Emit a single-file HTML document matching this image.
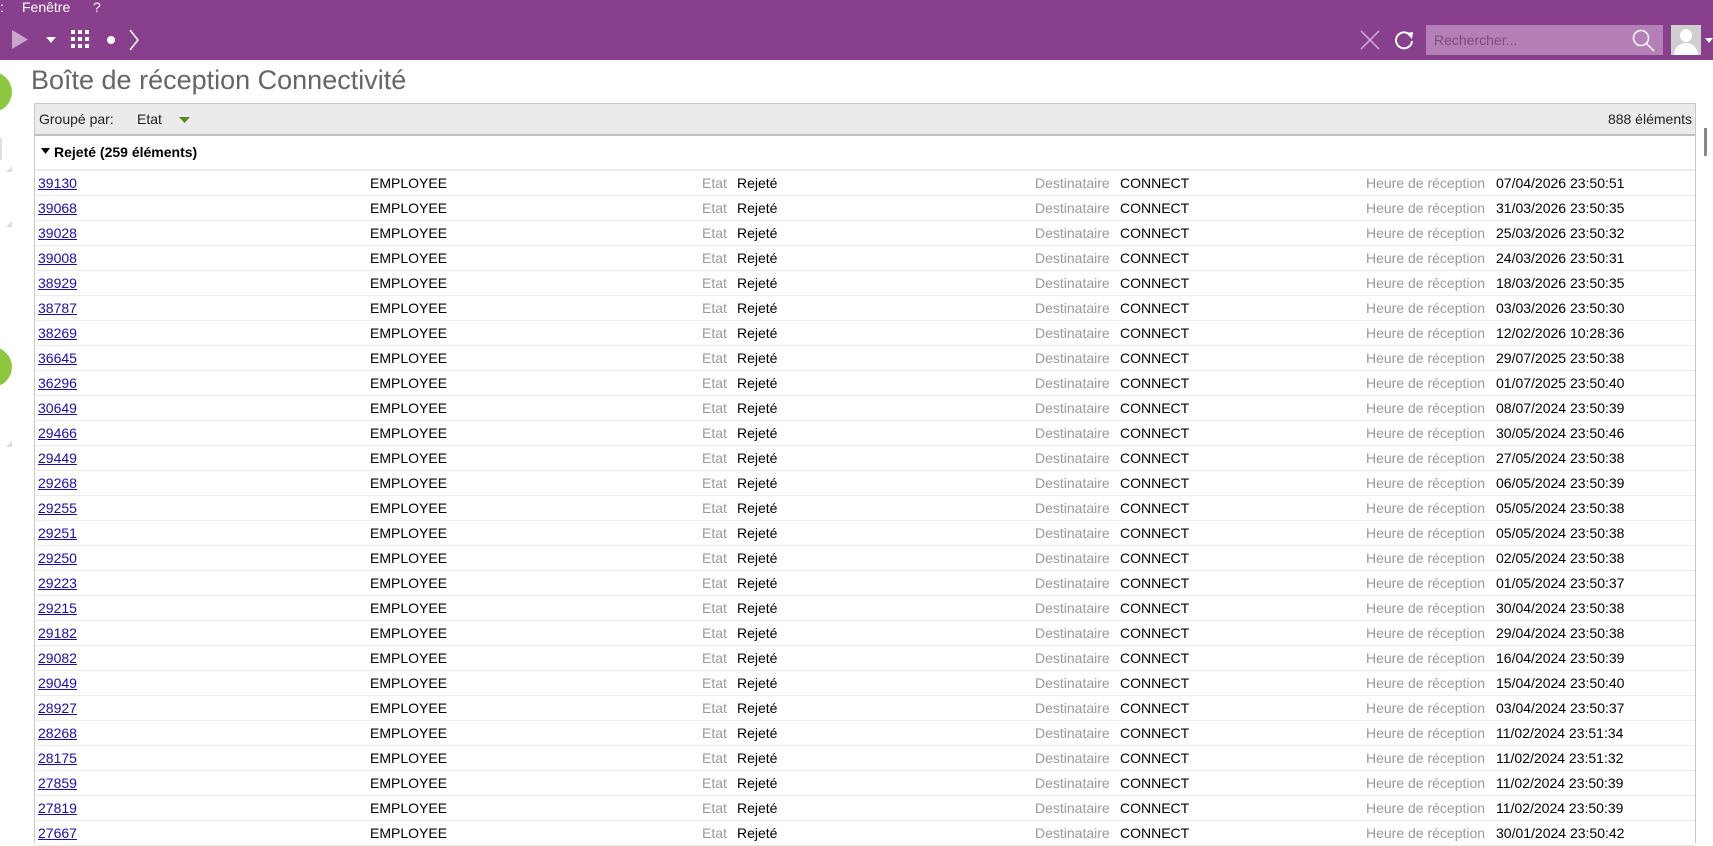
<!DOCTYPE html>
<html><head><meta charset="utf-8"><style>
*{margin:0;padding:0;box-sizing:border-box}
body{width:1713px;height:832px;overflow:hidden;background:#fff;font-family:"Liberation Sans",Arial,sans-serif;position:relative}
.top{position:absolute;left:0;top:0;width:1713px;height:60px;background:#883f8c}
.menu{position:absolute;top:-1px;color:#fff;font-size:14px}
.title{position:absolute;left:31px;top:65px;font-size:27px;color:#666}
.grid{position:absolute;left:34px;top:103px;width:1662px;height:740px;border:1px solid #c8c8c8;border-bottom:none}
.hdr{height:32px;background:#ebebeb;border-bottom:2px solid #c0c0c0;position:relative;font-size:14px;color:#222}
.grp{height:35px;position:relative;font-size:14px;font-weight:bold;border-bottom:2px solid #ececec}
.row{height:25px;border-bottom:1px solid #ececec;position:relative;font-size:14px;color:#000}
.row span{position:absolute;top:4px;white-space:nowrap}
.l{color:#999}
a{color:#1a0dab;text-decoration:underline}
.sb{position:absolute;left:1696px;top:103px;width:17px;height:740px;background:#fff}
.circ{position:absolute;background:#8dc63f;border-radius:50%}
.tri{position:absolute;width:0;height:0;border-left:6px solid transparent;border-bottom:6px solid #ddd}
</style></head><body>
<div class="top">
<span class="menu" style="left:0">:</span>
<span class="menu" style="left:22px">Fenêtre</span>
<span class="menu" style="left:93px">?</span>
<svg style="position:absolute;left:12px;top:30px" width="18" height="19"><path d="M0 0 L16 9.5 L0 19Z" fill="#c9a6cc"/></svg>
<svg style="position:absolute;left:46px;top:37px" width="10" height="6"><path d="M0 0H10L5 6Z" fill="#fff"/></svg>
<svg style="position:absolute;left:71px;top:30px" width="19" height="19" fill="#fff"><rect x="0" y="0" width="4" height="4"/><rect x="7" y="0" width="4" height="4"/><rect x="14" y="0" width="4" height="4"/><rect x="0" y="7" width="4" height="4"/><rect x="7" y="7" width="4" height="4"/><rect x="14" y="7" width="4" height="4"/><rect x="0" y="14" width="4" height="4"/><rect x="7" y="14" width="4" height="4"/><rect x="14" y="14" width="4" height="4"/></svg>
<div style="position:absolute;left:107px;top:36px;width:8px;height:8px;border-radius:50%;background:#fff"></div>
<svg style="position:absolute;left:128px;top:29px" width="12" height="22"><path d="M2 1L10 11L2 21" stroke="#fff" stroke-width="1.5" fill="none"/></svg>
<svg style="position:absolute;left:1360px;top:30px" width="20" height="20"><path d="M1 1L19 19M19 1L1 19" stroke="#c9a6cc" stroke-width="1.6"/></svg>
<svg style="position:absolute;left:1393px;top:29px" width="22" height="22"><path d="M17 6A8 8 0 1 0 19 12" stroke="#fff" stroke-width="2" fill="none"/><path d="M13 4L20 3L19 10Z" fill="#fff"/></svg>
<div style="position:absolute;left:1426px;top:25px;width:237px;height:30px;background:#b57fb8"></div>
<span style="position:absolute;left:1434px;top:32px;font-size:14px;color:#7e4a82">Rechercher...</span>
<svg style="position:absolute;left:1632px;top:29px" width="24" height="24"><circle cx="9" cy="9" r="7.5" stroke="#fff" stroke-width="1.5" fill="none"/><path d="M14.5 14.5L22 22" stroke="#fff" stroke-width="1.5"/></svg>
<div style="position:absolute;left:1671px;top:25px;width:30px;height:30px;background:#cfcfcf;overflow:hidden"><div style="position:absolute;left:9px;top:4px;width:12px;height:13px;border-radius:50%;background:#fff"></div><div style="position:absolute;left:3px;top:18px;width:24px;height:16px;border-radius:12px 12px 0 0;background:#fff"></div></div>
<svg style="position:absolute;left:1705px;top:38px" width="8" height="6"><path d="M0 0H8L4 5Z" fill="#fff"/></svg>
</div>
<div class="circ" style="left:-28px;top:72px;width:40px;height:40px"></div>
<div class="circ" style="left:-28px;top:347px;width:40px;height:40px"></div>
<div class="tri" style="left:6px;top:166px"></div>
<div class="tri" style="left:6px;top:221px"></div>
<div class="tri" style="left:6px;top:441px"></div>
<div style="position:absolute;left:0;top:138px;width:2px;height:22px;background:#e0e0e0"></div>
<div class="title">Boîte de réception Connectivité</div>
<div class="grid">
<div class="hdr"><span style="position:absolute;left:4px;top:7px">Groupé par:</span><span style="position:absolute;left:102px;top:7px">Etat</span><svg style="position:absolute;left:144px;top:13px" width="11" height="7"><path d="M0 0H11L5.5 6Z" fill="#5a8a1c"/></svg><span style="position:absolute;right:3px;top:7px">888 éléments</span></div>
<div class="grp"><svg style="position:absolute;left:6px;top:12px" width="9" height="6"><path d="M0 0H9L4.5 6Z" fill="#000"/></svg><span style="position:absolute;left:19px;top:8px">Rejeté (259 éléments)</span></div>
<div id="rows"></div>
</div>
<div class="sb"><div style="position:absolute;left:8px;top:25px;width:3px;height:28px;background:#888"></div></div>
<script>
var d=[["39130","07/04/2026 23:50:51"],["39068","31/03/2026 23:50:35"],["39028","25/03/2026 23:50:32"],["39008","24/03/2026 23:50:31"],["38929","18/03/2026 23:50:35"],["38787","03/03/2026 23:50:30"],["38269","12/02/2026 10:28:36"],["36645","29/07/2025 23:50:38"],["36296","01/07/2025 23:50:40"],["30649","08/07/2024 23:50:39"],["29466","30/05/2024 23:50:46"],["29449","27/05/2024 23:50:38"],["29268","06/05/2024 23:50:39"],["29255","05/05/2024 23:50:38"],["29251","05/05/2024 23:50:38"],["29250","02/05/2024 23:50:38"],["29223","01/05/2024 23:50:37"],["29215","30/04/2024 23:50:38"],["29182","29/04/2024 23:50:38"],["29082","16/04/2024 23:50:39"],["29049","15/04/2024 23:50:40"],["28927","03/04/2024 23:50:37"],["28268","11/02/2024 23:51:34"],["28175","11/02/2024 23:51:32"],["27859","11/02/2024 23:50:39"],["27819","11/02/2024 23:50:39"],["27667","30/01/2024 23:50:42"]];
var h="";d.forEach(function(r){h+='<div class="row"><span style="left:3px"><a>'+r[0]+'</a></span><span style="left:335px">EMPLOYEE</span><span class="l" style="left:667px">Etat</span><span style="left:702px">Rejeté</span><span class="l" style="left:1000px">Destinataire</span><span style="left:1085px">CONNECT</span><span class="l" style="left:1331px">Heure de réception</span><span style="left:1461px">'+r[1]+'</span></div>'});
document.getElementById("rows").innerHTML=h;
</script>
</body></html>
